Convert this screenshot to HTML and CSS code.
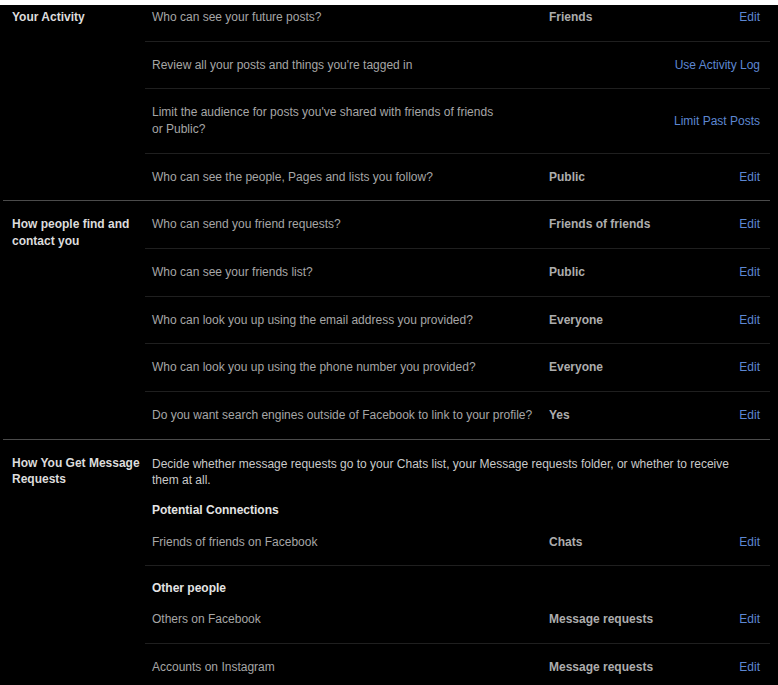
FILE: index.html
```html
<!DOCTYPE html>
<html lang="en">
<head>
<meta charset="utf-8">
<title>Privacy settings</title>
<link rel="stylesheet" href="styles.css">
</head>
<body>
<div class="topbar"></div>
<div class="viewport">
  <div class="settings">

    <section class="group">
      <h3 class="group-title">Your Activity</h3>
      <div class="rows">
        <div class="row">
          <span class="question">Who can see your future posts?</span>
          <span class="value">Friends</span>
          <a class="action" href="#">Edit</a>
        </div>
        <div class="row">
          <span class="question">Review all your posts and things you're tagged in</span>
          <span class="value"></span>
          <a class="action" href="#">Use Activity Log</a>
        </div>
        <div class="row">
          <span class="question question-narrow">Limit the audience for posts you've shared with friends of friends or Public?</span>
          <span class="value"></span>
          <a class="action" href="#">Limit Past Posts</a>
        </div>
        <div class="row">
          <span class="question">Who can see the people, Pages and lists you follow?</span>
          <span class="value">Public</span>
          <a class="action" href="#">Edit</a>
        </div>
      </div>
    </section>

    <section class="group">
      <h3 class="group-title">How people find and contact you</h3>
      <div class="rows">
        <div class="row">
          <span class="question">Who can send you friend requests?</span>
          <span class="value">Friends of friends</span>
          <a class="action" href="#">Edit</a>
        </div>
        <div class="row">
          <span class="question">Who can see your friends list?</span>
          <span class="value">Public</span>
          <a class="action" href="#">Edit</a>
        </div>
        <div class="row">
          <span class="question">Who can look you up using the email address you provided?</span>
          <span class="value">Everyone</span>
          <a class="action" href="#">Edit</a>
        </div>
        <div class="row">
          <span class="question">Who can look you up using the phone number you provided?</span>
          <span class="value">Everyone</span>
          <a class="action" href="#">Edit</a>
        </div>
        <div class="row">
          <span class="question">Do you want search engines outside of Facebook to link to your profile?</span>
          <span class="value">Yes</span>
          <a class="action" href="#">Edit</a>
        </div>
      </div>
    </section>

    <section class="group">
      <h3 class="group-title">How You Get Message Requests</h3>
      <div class="rows">
        <p class="intro">Decide whether message requests go to your Chats list, your Message requests folder, or whether to receive them at all.</p>
        <h4 class="subhead">Potential Connections</h4>
        <div class="row">
          <span class="question">Friends of friends on Facebook</span>
          <span class="value">Chats</span>
          <a class="action" href="#">Edit</a>
        </div>
        <h4 class="subhead">Other people</h4>
        <div class="row">
          <span class="question">Others on Facebook</span>
          <span class="value">Message requests</span>
          <a class="action" href="#">Edit</a>
        </div>
        <div class="row">
          <span class="question">Accounts on Instagram</span>
          <span class="value">Message requests</span>
          <a class="action" href="#">Edit</a>
        </div>
      </div>
    </section>

  </div>
</div>
</body>
</html>
```
FILE: styles.css
```css
* {
  box-sizing: border-box;
}

html,
body {
  margin: 0;
  padding: 0;
  background: #000;
}

body {
  font-family: "Liberation Sans", Arial, sans-serif;
  font-size: 12px;
  line-height: 16.5px;
  color: #a6a6a6;
  height: 685px;
  overflow: hidden;
}

.topbar {
  height: 5px;
  background: #fff;
}

/* scrolled settings pane */
.viewport {
  height: 680px;
  overflow: hidden;
}

.settings {
  margin: -12px 8px 0 3px;
}

.group {
  display: flex;
  border-top: 1px solid #4b4b4b;
}

.group-title {
  flex: 0 0 142px;
  margin: 0;
  padding: 15px 0 0 9px;
  font-size: 12px;
  font-weight: bold;
  line-height: 16.5px;
  color: #dcdcdc;
}

.rows {
  flex: 1;
  min-width: 0;
}

.row {
  display: grid;
  grid-template-columns: 397px 1fr auto;
  align-items: center;
  padding: 15.1px 10px 15.1px 7px;
  border-bottom: 1px solid #1f1f1f;
}

.row:last-child {
  border-bottom: 0;
}

.question {
  color: #a6a6a6;
}

.question-narrow {
  max-width: 348px;
}

.value {
  font-weight: bold;
  color: #adadad;
}

.action {
  color: #5d87d2;
  text-decoration: none;
  text-align: right;
}

.intro {
  margin: 0;
  padding: 16px 16px 0 7px;
  color: #c9c9c9;
}

.subhead {
  margin: 0;
  padding: 13.5px 10px 0 7px;
  font-size: 12px;
  font-weight: bold;
  line-height: 16.5px;
  color: #e4e4e4;
}
```
